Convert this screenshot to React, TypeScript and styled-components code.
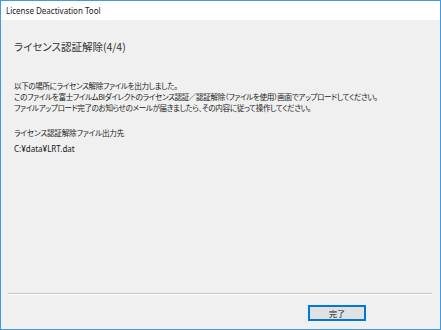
import React from "react";
import styled, { createGlobalStyle } from "styled-components";

const Global = createGlobalStyle`
  html, body { margin: 0; padding: 0; background: #ffffff; }
  * { box-sizing: border-box; }
`;

const jp = `"Noto Sans CJK JP", "Noto Sans", sans-serif`;

const Window = styled.div`
  width: 441px;
  height: 330px;
  border: 1px solid #3f9be6;
  display: flex;
  flex-direction: column;
  background: #f0f0f0;
  font-family: ${jp};
  color: #1a1a1a;
`;

const TitleBar = styled.div`
  height: 19px;
  background: #ffffff;
  display: flex;
  align-items: center;
  padding-left: 5px;
  font-family: "Noto Sans", sans-serif;
  font-size: 8px;
  color: #202020;
`;

const Content = styled.div`
  flex: 1;
  display: flex;
  flex-direction: column;
  padding: 20px 13px 0 13px;
`;

const Heading = styled.div`
  font-size: 10.5px;
  line-height: 14px;
  font-feature-settings: "palt";
  color: #333;
  margin-bottom: 26px;
`;

const Paragraph = styled.div`
  font-size: 7.6px;
  line-height: 11px;
  letter-spacing: -0.4px;
  font-feature-settings: "palt";
  margin-bottom: 14px;
`;

const Line = styled.div`
  white-space: nowrap;
`;

const Label = styled.div`
  font-size: 7.6px;
  line-height: 11px;
  letter-spacing: -0.2px;
  font-feature-settings: "palt";
  margin-bottom: 5px;
`;

const Path = styled.div`
  font-family: "Noto Sans", sans-serif;
  font-size: 8px;
  line-height: 11px;
`;

const Footer = styled.div`
  display: flex;
  flex-direction: column;
  padding: 0 8px 8px 7px;
`;

const Separator = styled.div`
  height: 2px;
  border-top: 1px solid #c4c4c4;
  border-bottom: 1px solid #ffffff;
  margin-bottom: 10px;
`;

const ButtonRow = styled.div`
  display: flex;
  justify-content: flex-end;
  padding-right: 66px;
`;

const Button = styled.button<{ $focused?: boolean }>`
  width: 58px;
  height: 16px;
  padding: 0;
  background: #e1e1e1;
  border: 1px solid ${(p) => (p.$focused ? "#0078d7" : "#adadad")};
  box-shadow: ${(p) => (p.$focused ? "inset 0 0 0 1px #0078d7" : "none")};
  font-family: ${jp};
  font-size: 8px;
  color: #1a1a1a;
  display: flex;
  align-items: center;
  justify-content: center;
`;

export default function App() {
  return (
    <>
      <Global />
      <Window>
        <TitleBar>License Deactivation Tool</TitleBar>
        <Content>
          <Heading>ライセンス認証解除(4/4)</Heading>
          <Paragraph>
            <Line>以下の場所にライセンス解除ファイルを出力しました。</Line>
            <Line>
              このファイルを富士フイルムBIダイレクトのライセンス認証／認証解除（ファイルを使用）画面でアップロードしてください。
            </Line>
            <Line>
              ファイルアップロード完了のお知らせのメールが届きましたら、その内容に従って操作してください。
            </Line>
          </Paragraph>
          <Label>ライセンス認証解除ファイル出力先</Label>
          <Path>C:¥data¥LRT.dat</Path>
        </Content>
        <Footer>
          <Separator />
          <ButtonRow>
            <Button $focused>完了</Button>
          </ButtonRow>
        </Footer>
      </Window>
    </>
  );
}
